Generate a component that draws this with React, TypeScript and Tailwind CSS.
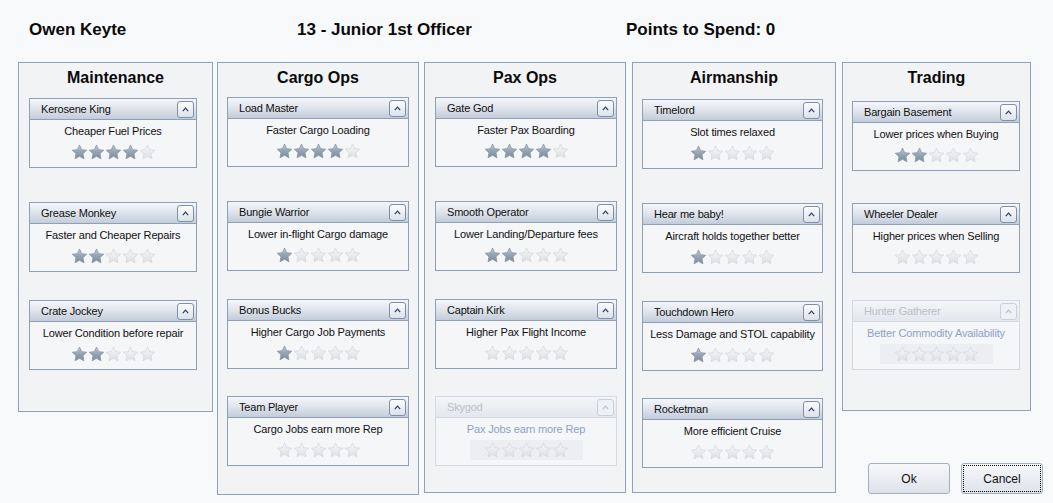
import React from "react";

type Perk = { name: string; desc: string; stars: number; disabled?: boolean };
type Column = {
  title: string;
  w: string;
  h: string;
  ml: string;
  pl: string;
  top: string;
  cardW: string;
  cards: Perk[];
};

const columns: Column[] = [
  {
    title: "Maintenance",
    w: "w-[195px]",
    h: "h-[350px]",
    ml: "ml-[18px]",
    pl: "pl-[10px]",
    top: "pt-[35px]",
    cardW: "w-[168px]",
    cards: [
      { name: "Kerosene King", desc: "Cheaper Fuel Prices", stars: 4 },
      { name: "Grease Monkey", desc: "Faster and Cheaper Repairs", stars: 2 },
      { name: "Crate Jockey", desc: "Lower Condition before repair", stars: 2 },
    ],
  },
  {
    title: "Cargo Ops",
    w: "w-[202px]",
    h: "h-[433px]",
    ml: "ml-[4px]",
    pl: "pl-[9px]",
    top: "pt-[34px]",
    cardW: "w-[182px]",
    cards: [
      { name: "Load Master", desc: "Faster Cargo Loading", stars: 4 },
      { name: "Bungie Warrior", desc: "Lower in-flight Cargo damage", stars: 1 },
      { name: "Bonus Bucks", desc: "Higher Cargo Job Payments", stars: 1 },
      { name: "Team Player", desc: "Cargo Jobs earn more Rep", stars: 0 },
    ],
  },
  {
    title: "Pax Ops",
    w: "w-[202px]",
    h: "h-[431px]",
    ml: "ml-[5px]",
    pl: "pl-[10px]",
    top: "pt-[34px]",
    cardW: "w-[182px]",
    cards: [
      { name: "Gate God", desc: "Faster Pax Boarding", stars: 4 },
      { name: "Smooth Operator", desc: "Lower Landing/Departure fees", stars: 2 },
      { name: "Captain Kirk", desc: "Higher Pax Flight Income", stars: 0 },
      { name: "Skygod", desc: "Pax Jobs earn more Rep", stars: 0, disabled: true },
    ],
  },
  {
    title: "Airmanship",
    w: "w-[204px]",
    h: "h-[431px]",
    ml: "ml-[6px]",
    pl: "pl-[9px]",
    top: "pt-[36px]",
    cardW: "w-[181px]",
    cards: [
      { name: "Timelord", desc: "Slot times relaxed", stars: 1 },
      { name: "Hear me baby!", desc: "Aircraft holds together better", stars: 1 },
      { name: "Touchdown Hero", desc: "Less Damage and STOL capability", stars: 1 },
      { name: "Rocketman", desc: "More efficient Cruise", stars: 0 },
    ],
  },
];

const trading: Perk[] = [
  { name: "Bargain Basement", desc: "Lower prices when Buying", stars: 2 },
  { name: "Wheeler Dealer", desc: "Higher prices when Selling", stars: 0 },
  { name: "Hunter Gatherer", desc: "Better Commodity Availability", stars: 0, disabled: true },
];

const gaps = ["mt-0", "mt-[34px]", "mt-[28px]", "mt-[27px]"];
const tradeGaps = ["mt-0", "mt-[32px]", "mt-[27px]"];

function Star({ on, id }: { on: boolean; id: string }) {
  return (
    <svg width="17" height="16" viewBox="0 0 24 23">
      <defs>
        <linearGradient id={id} x1="0" y1="0" x2="0" y2="1">
          {on ? (
            <>
              <stop offset="0" stopColor="#c4ccd6" />
              <stop offset="0.5" stopColor="#96a3b3" />
              <stop offset="1" stopColor="#7f8c9c" />
            </>
          ) : (
            <>
              <stop offset="0" stopColor="#f7f8f9" />
              <stop offset="1" stopColor="#dcdfe3" />
            </>
          )}
        </linearGradient>
      </defs>
      <path
        d="M12 1.4l3.1 6.7 7.3.9-5.4 5 1.4 7.3L12 17.7l-6.4 3.6 1.4-7.3-5.4-5 7.3-.9z"
        fill={`url(#${id})`}
        stroke={on ? "#8593a4" : "#d3d6db"}
        strokeWidth="1.1"
        strokeLinejoin="round"
      />
    </svg>
  );
}

function Card({ perk, w, uid }: { perk: Perk; w: string; uid: string }) {
  const dis = perk.disabled;
  return (
    <div className={`${w} border ${dis ? "border-[#d4dae3]" : "border-[#8e9fb8]"} bg-[#f5f6f8]`}>
      <div
        className={`h-[21px] flex items-center justify-between pl-[11px] pr-[2px] border-b ${
          dis
            ? "border-[#d4dae3] bg-gradient-to-b from-[#f3f5f8] to-[#e3e7ed] text-[#b9bfc8]"
            : "border-[#8e9fb8] bg-gradient-to-b from-[#f4f6fa] via-[#dfe4ec] to-[#c4ccd9] text-[#101010]"
        } text-[11px] tracking-[-0.2px]`}
      >
        <span>{perk.name}</span>
        <span
          className={`w-[17px] h-[17px] rounded-[3px] border flex items-center justify-center ${
            dis ? "border-[#c9d0da] bg-[#eef1f5]" : "border-[#7f8fa8] bg-gradient-to-b from-[#fbfcfd] to-[#dde2ea]"
          }`}
        >
          <svg width="7" height="5" viewBox="0 0 7 5">
            <path d="M0.8 4.2L3.5 1.2L6.2 4.2" fill="none" stroke={dis ? "#b8c0cc" : "#2d3a6a"} strokeWidth="1.2" />
          </svg>
        </span>
      </div>
      <div className="h-[47px] flex flex-col items-center pt-[3px]">
        <span className={`text-[11px] tracking-[-0.15px] leading-[16px] ${dis ? "text-[#8ea1c6]" : "text-[#111]"}`}>
          {perk.desc}
        </span>
        <div className={`mt-[3px] flex px-[14px] py-[2px] ${dis ? "bg-[#eceef1]" : ""}`}>
          {[0, 1, 2, 3, 4].map((i) => (
            <Star key={i} on={i < perk.stars} id={`${uid}-s${i}`} />
          ))}
        </div>
      </div>
    </div>
  );
}

function Button({ label, focus }: { label: string; focus?: boolean }) {
  return (
    <div className="w-[82px] h-[31px] rounded-[3px] border border-[#a3b0c2] bg-gradient-to-b from-[#f7f8fa] to-[#dde2ea] p-[1px]">
      <div
        className={`w-full h-full flex items-center justify-center text-[12px] text-[#111] ${
          focus ? "border border-dotted border-black" : ""
        }`}
      >
        {label}
      </div>
    </div>
  );
}

function Title({ text }: { text: string }) {
  return (
    <div className="h-0 relative">
      <div className="absolute left-0 right-0 top-[3px] text-center text-[16px] font-bold text-[#0a0a0a]">
        {text}
      </div>
    </div>
  );
}

export default function App() {
  return (
    <div
      className="w-[1053px] h-[503px] bg-[#f8f9fb] overflow-hidden"
      style={{ fontFamily: '"Liberation Sans", Arial, sans-serif' }}
    >
      <div className="h-[62px] flex items-center text-[17px] font-bold text-[#0a0a0a] pb-[2px]">
        <span className="ml-[29px] w-[268px]">Owen Keyte</span>
        <span className="w-[329px]">13 - Junior 1st Officer</span>
        <span>Points to Spend: 0</span>
      </div>
      <div className="flex items-start">
        {columns.map((col, ci) => (
          <div key={col.title} className={`${col.w} ${col.h} ${col.ml} border border-[#8fa1bb] bg-[#f2f3f5]`}>
            <Title text={col.title} />
            <div className={`${col.top} ${col.pl} flex flex-col`}>
              {col.cards.map((c, i) => (
                <div key={c.name} className={gaps[i]}>
                  <Card perk={c} w={col.cardW} uid={`c${ci}-${i}`} />
                </div>
              ))}
            </div>
          </div>
        ))}
        <div className="ml-[6px] h-[432px] w-[201px] flex flex-col justify-between">
          <div className="w-[189px] h-[349px] border border-[#8fa1bb] bg-[#f2f3f5]">
            <Title text="Trading" />
            <div className="pt-[38px] pl-[9px] flex flex-col">
              {trading.map((c, i) => (
                <div key={c.name} className={tradeGaps[i]}>
                  <Card perk={c} w="w-[168px]" uid={`t-${i}`} />
                </div>
              ))}
            </div>
          </div>
          <div className="flex gap-[11px] justify-end ml-[26px]">
            <Button label="Ok" />
            <Button label="Cancel" focus />
          </div>
        </div>
      </div>
    </div>
  );
}
